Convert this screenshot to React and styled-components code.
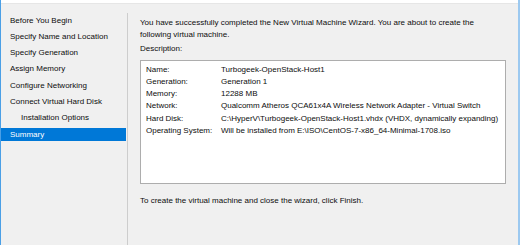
import React from "react";
import styled, { createGlobalStyle } from "styled-components";

const Global = createGlobalStyle`
  html, body { margin: 0; padding: 0; background: #f0f0f0; }
  * { box-sizing: border-box; }
`;

const Window = styled.div`
  width: 520px;
  height: 245px;
  border-left: 1px solid #4a9fe6;
  border-right: 2px solid #9cc9f0;
  background: #f0f0f0;
  display: flex;
  flex-direction: column;
  overflow: hidden;
  font-family: "Liberation Sans", Arial, sans-serif;
  font-size: 8px;
  color: #0d0d0d;
`;

const TopBand = styled.div`
  height: 4px;
  flex: none;
  background: #fff;
  border-bottom: 1px solid #e6e6e6;
`;

const Body = styled.div`
  flex: 1;
  display: flex;
  min-height: 0;
`;

const Nav = styled.ul`
  list-style: none;
  margin: 0;
  padding: 9.5px 0 0 0;
  width: 125px;
  flex: none;
`;

const NavItem = styled.li`
  height: 13px;
  line-height: 13px;
  margin-bottom: 3.3px;
  padding-left: ${(p) => (p.$indent ? 20 : 9)}px;
  background: ${(p) => (p.$active ? "#0078d7" : "transparent")};
  color: ${(p) => (p.$active ? "#fff" : "inherit")};
  white-space: nowrap;
`;

const Separator = styled.div`
  width: 1px;
  margin-left: 1px;
  margin-top: 9px;
  background: #cdcdcd;
  flex: none;
`;

const Main = styled.div`
  flex: 1;
  padding: 13px 12px 0 12px;
  display: flex;
  flex-direction: column;
`;

const Intro = styled.p`
  margin: 0;
  line-height: 11.5px;
  padding-right: 20px;
`;

const Label = styled.div`
  margin-top: 3px;
  line-height: 12px;
`;

const Box = styled.div`
  margin-top: 5px;
  height: 124px;
  background: #fff;
  border: 1px solid #adadad;
  padding: 2.5px 5px 0 5px;
  display: grid;
  grid-template-columns: 75px 1fr;
  grid-auto-rows: 12.3px;
  align-content: start;
  line-height: 12.3px;
  white-space: nowrap;
`;

const Footer = styled.div`
  margin-top: 11px;
  line-height: 12px;
`;

const rows = [
  ["Name:", "Turbogeek-OpenStack-Host1"],
  ["Generation:", "Generation 1"],
  ["Memory:", "12288 MB"],
  ["Network:", "Qualcomm Atheros QCA61x4A Wireless Network Adapter - Virtual Switch"],
  ["Hard Disk:", "C:\\HyperV\\Turbogeek-OpenStack-Host1.vhdx (VHDX, dynamically expanding)"],
  ["Operating System:", "Will be installed from E:\\ISO\\CentOS-7-x86_64-Minimal-1708.iso"],
];

const steps = [
  { t: "Before You Begin" },
  { t: "Specify Name and Location" },
  { t: "Specify Generation" },
  { t: "Assign Memory" },
  { t: "Configure Networking" },
  { t: "Connect Virtual Hard Disk" },
  { t: "Installation Options", indent: true },
  { t: "Summary", active: true },
];

export default function App() {
  return (
    <>
      <Global />
      <Window>
        <TopBand />
        <Body>
          <Nav>
            {steps.map((s) => (
              <NavItem key={s.t} $indent={s.indent} $active={s.active}>
                {s.t}
              </NavItem>
            ))}
          </Nav>
          <Separator />
          <Main>
            <Intro>
              You have successfully completed the New Virtual Machine Wizard. You are about to create the
              following virtual machine.
            </Intro>
            <Label>Description:</Label>
            <Box>
              {rows.map(([k, v]) => (
                <React.Fragment key={k}>
                  <span>{k}</span>
                  <span>{v}</span>
                </React.Fragment>
              ))}
            </Box>
            <Footer>To create the virtual machine and close the wizard, click Finish.</Footer>
          </Main>
        </Body>
      </Window>
    </>
  );
}
